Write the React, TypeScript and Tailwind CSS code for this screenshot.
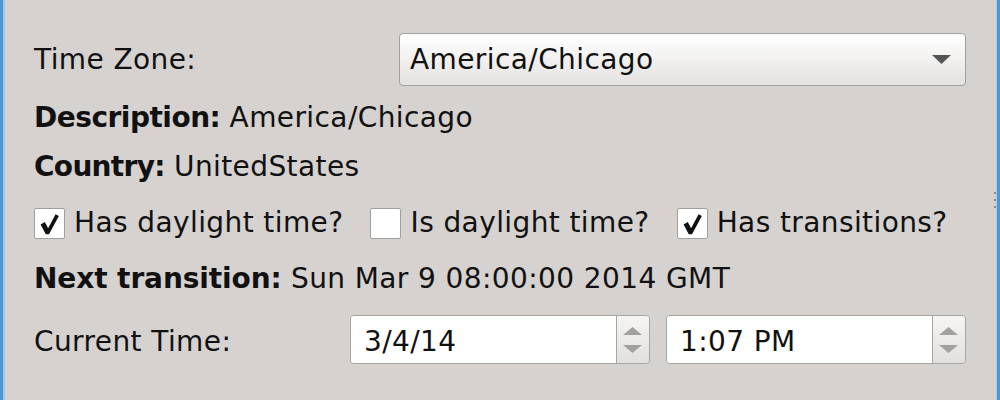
import React from "react";

const font = { fontFamily: '"DejaVu Sans", "Liberation Sans", sans-serif' };

function Check({ checked }: { checked: boolean }) {
  return (
    <div className="w-[31px] h-[31px] shrink-0 bg-white border border-[#a29e9b] rounded-[2px] flex items-center justify-center">
      {checked && (
        <svg width="31" height="31" viewBox="0 0 31 31">
          <polygon points="6,16.5 10.5,14 14,20.5 22,5.5 25.5,7.5 15,27 11.5,27" fill="#111" />
        </svg>
      )}
    </div>
  );
}

function CheckItem({ checked, label }: { checked: boolean; label: string }) {
  return (
    <div className="flex items-center">
      <Check checked={checked} />
      <span className="ml-[9px] leading-[34px]">{label}</span>
    </div>
  );
}

function Spin({ value }: { value: string }) {
  return (
    <div className="w-[300px] h-[49px] flex rounded-[4px] border border-[#a8a4a1] overflow-hidden">
      <div className="flex-1 bg-white pl-[13px] flex items-center">
        <span className="leading-[34px] pt-[4px]">{value}</span>
      </div>
      <div className="w-[33px] border-l border-[#a8a4a1] bg-linear-to-b from-[#f6f5f4] to-[#e2e0de] flex flex-col items-center justify-center gap-[10px] pr-[2px]">
        <svg width="19" height="8" viewBox="0 0 19 8">
          <polygon points="0,8 9.5,0 19,8" fill="#a3a19f" />
        </svg>
        <svg width="19" height="8" viewBox="0 0 19 8">
          <polygon points="0,0 19,0 9.5,8" fill="#a3a19f" />
        </svg>
      </div>
    </div>
  );
}

export default function App() {
  return (
    <div
      className="w-[1000px] h-[400px] bg-[#d6d2d0] flex text-[28px] tracking-[0.4px] text-[#111] overflow-hidden"
      style={font}
    >
      <div className="w-[3px] bg-[#4f97d4]" />
      <div className="w-[2px] bg-[#a3c6e4]" />
      <div className="flex-1 flex flex-col pl-[29px] pr-[27px] pt-[33px]">
        <div className="flex items-center h-[53px]">
          <div className="w-[365px] leading-[34px]">Time Zone:</div>
          <div className="flex-1 h-[53px] rounded-[4px] border border-[#a29e9b] bg-linear-to-b from-white to-[#e4e2e0] flex items-center pl-[10px] pr-[14px]">
            <span className="flex-1 leading-[34px]">America/Chicago</span>
            <svg width="19" height="9" viewBox="0 0 19 9">
              <polygon points="0,0 19,0 9.5,9" fill="#555" />
            </svg>
          </div>
        </div>
        <div className="mt-[15px] leading-[34px]">
          <span className="font-bold tracking-[-0.5px]">Description:</span> America/Chicago
        </div>
        <div className="mt-[15px] leading-[34px]">
          <span className="font-bold tracking-[-0.7px]">Country:</span> UnitedStates
        </div>
        <div className="mt-[22px] h-[34px] flex items-center gap-[27px]">
          <CheckItem checked={true} label="Has daylight time?" />
          <CheckItem checked={false} label="Is daylight time?" />
          <CheckItem checked={true} label="Has transitions?" />
        </div>
        <div className="mt-[22px] leading-[34px]">
          <span className="font-bold tracking-[-0.1px]">Next transition:</span> Sun Mar 9 08:00:00 2014 GMT
        </div>
        <div className="mt-[19px] h-[49px] flex items-center">
          <div className="w-[316px] leading-[34px] pt-[4px]">Current Time:</div>
          <Spin value="3/4/14" />
          <div className="w-[16px]" />
          <Spin value="1:07 PM" />
        </div>
      </div>
      <div className="w-[3px] flex flex-col items-center justify-center gap-[5px]">
        <div className="w-[2px] h-[2px] bg-[#8d8985]" />
        <div className="w-[2px] h-[2px] bg-[#8d8985]" />
        <div className="w-[2px] h-[2px] bg-[#8d8985]" />
      </div>
      <div className="w-[1px] bg-[#a8cbe6]" />
      <div className="w-[3px] bg-[#4f97d4]" />
    </div>
  );
}
